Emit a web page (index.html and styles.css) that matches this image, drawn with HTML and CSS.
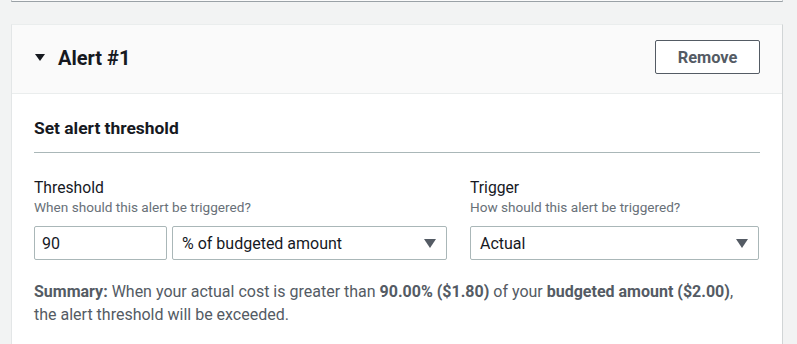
FILE: index.html
```html
<!DOCTYPE html>
<html>
<head>
<meta charset="utf-8">
<link rel="stylesheet" href="styles.css">
</head>
<body>
<div class="page">
  <div class="prev-card"></div>
  <div class="card">
    <div class="card-header">
      <div class="title">
        <svg class="caret" width="10" height="7" viewBox="0 0 10 7"><polygon points="0,0 10,0 5,7" fill="#16191f"/></svg>
        <h2>Alert #1</h2>
      </div>
      <button class="btn">Remove</button>
    </div>
    <div class="card-body">
      <h3 class="section-title">Set alert threshold</h3>
      <div class="fields">
        <div class="field field-threshold">
          <div class="label">Threshold</div>
          <div class="desc">When should this alert be triggered?</div>
          <div class="controls">
            <div class="input">90</div>
            <div class="select select-unit"><span>% of budgeted amount</span><svg class="arrow" width="12" height="9" viewBox="0 0 12 9"><polygon points="0,0 12,0 6,9" fill="#545b64"/></svg></div>
          </div>
        </div>
        <div class="field field-trigger">
          <div class="label">Trigger</div>
          <div class="desc">How should this alert be triggered?</div>
          <div class="controls">
            <div class="select select-trigger"><span>Actual</span><svg class="arrow" width="12" height="9" viewBox="0 0 12 9"><polygon points="0,0 12,0 6,9" fill="#545b64"/></svg></div>
          </div>
        </div>
      </div>
      <p class="summary"><b>Summary:</b> When your actual cost is greater than <b>90.00% ($1.80)</b> of your <b>budgeted amount ($2.00)</b>, the alert threshold will be exceeded.</p>
    </div>
  </div>
</div>
</body>
</html>
```

FILE: styles.css
```css
* { box-sizing: border-box; }
html, body { margin: 0; padding: 0; }
body {
  background: #f2f3f3;
  font-family: Roboto, "Liberation Sans", Arial, sans-serif;
  color: #16191f;
  width: 797px;
  height: 344px;
  overflow: hidden;
}
.page {
  padding-left: 11px;
  width: 783px;
}
.prev-card {
  height: 2px;
  background: #fafafa;
  border-left: 1px solid #c6cbcd;
  border-right: 1px solid #c6cbcd;
  border-bottom: 1px solid #9aa1a6;
}
.card {
  margin-top: 22px;
  background: #ffffff;
  border-left: 1px solid #e3e6e7;
  border-right: 1px solid #d1d5d6;
  border-top: 1px solid #eaeded;
  height: 330px;
}
.card-header {
  background: #fafafa;
  border-bottom: 1px solid #eaeded;
  display: flex;
  align-items: flex-start;
  justify-content: space-between;
  padding: 15px 22px 18px 22px;
  height: 69px;
}
.title {
  display: flex;
  align-items: center;
  height: 34px;
  gap: 13px;
}
.caret { display: block; margin-left: 1px; margin-top: 1px; }
h2 {
  margin: 2px 0 0 0;
  font-size: 20px;
  font-weight: 700;
  color: #16191f;
}
.btn {
  width: 105px;
  height: 34px;
  background: #ffffff;
  border: 1px solid #545b64;
  border-radius: 2px;
  font-family: inherit;
  font-size: 16.4px;
  font-weight: 700;
  color: #545b64;
  padding: 0;
}
.card-body {
  padding: 22px 22px 0 22px;
}
.section-title {
  margin: 0;
  font-size: 17.4px;
  font-weight: 700;
  line-height: 24px;
  padding-bottom: 12px;
  border-bottom: 1px solid #aab7b8;
}
.fields {
  display: flex;
  gap: 23px;
  margin-top: 25px;
}
.field-threshold { width: 413px; }
.field-trigger { width: 289px; }
.label {
  font-size: 15.7px;
  line-height: 20px;
}
.desc {
  font-size: 13.6px;
  line-height: 16px;
  color: #687078;
  margin-top: 1px;
}
.controls {
  display: flex;
  gap: 5px;
  margin-top: 11px;
}
.input, .select {
  height: 34px;
  border: 1px solid #aab7b8;
  border-radius: 2px;
  background: #fff;
  display: flex;
  align-items: center;
  padding: 0 9px;
  font-size: 16px;
  color: #16191f;
}
.input { width: 133px; padding-left: 7px; }
.select { justify-content: space-between; }
.select-unit { width: 275px; }
.select-trigger { width: 289px; }
.arrow { display: block; margin-right: 1px; }
.summary {
  margin: 20px 0 0 0;
  max-width: 710px;
  font-size: 16px;
  line-height: 23px;
  color: #545b64;
}
.summary b { font-weight: 700; }
```
